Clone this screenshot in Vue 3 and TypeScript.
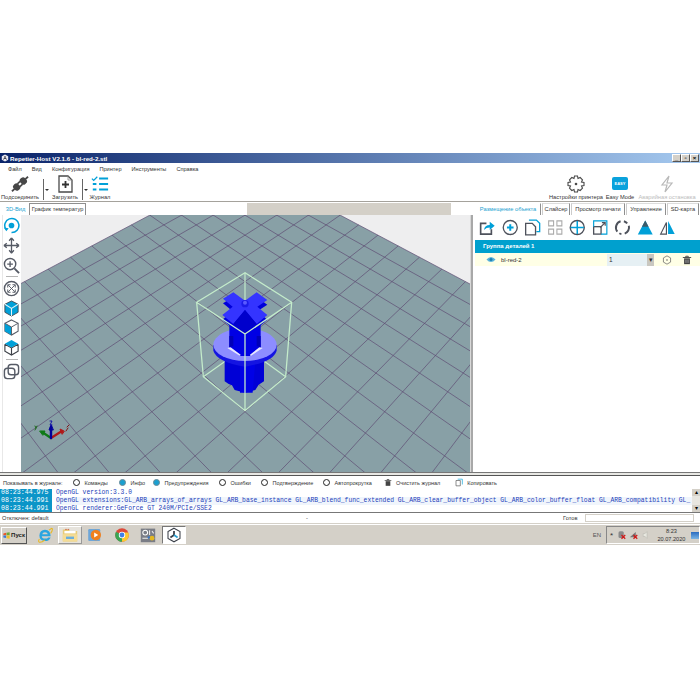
<script setup lang="ts">
const menu = ["Файл", "Вид", "Конфигурация", "Принтер", "Инструменты", "Справка"];
const rightTabs = [
  { label: "Размещение объекта", width: 66, active: true },
  { label: "Слайсер", width: 28, active: false },
  { label: "Просмотр печати", width: 54, active: false },
  { label: "Управление", width: 40, active: false },
  { label: "SD-карта", width: 32, active: false },
];
const logFilters = [
  { label: "Команды", on: false, width: 46 },
  { label: "Инфо", on: true, width: 34 },
  { label: "Предупреждения", on: true, width: 66 },
  { label: "Ошибки", on: false, width: 42 },
  { label: "Подтверждение", on: false, width: 62 },
  { label: "Автопрокрутка", on: false, width: 61 },
];
const logRows = [
  { time: "08:23:44.975", text: "OpenGL version:3.3.0" },
  {
    time: "08:23:44.991",
    text: "OpenGL extensions:GL_ARB_arrays_of_arrays GL_ARB_base_instance GL_ARB_blend_func_extended GL_ARB_clear_buffer_object GL_ARB_color_buffer_float GL_ARB_compatibility GL_",
  },
  { time: "08:23:44.991", text: "OpenGL renderer:GeForce GT 240M/PCIe/SSE2" },
];

// ground grid: perspective projection fitted to the picture
const horizon = -205;
const depthA = 0.0016215;
const depthB = 0.0000542;
const spread = 0.0755;
const project = (a: number, b: number) => {
  const w = 1 / (depthA + depthB * (a + b));
  return [245 + ((a - b) / 2) * spread * w, horizon + w];
};
const gridMax = 10;
const gridMin = -24;
const gridLines: number[][] = [];
for (let i = gridMin; i <= gridMax; i++) {
  const end = -14 - i;
  const p1 = project(i, gridMax);
  const p2 = project(i, end);
  const p3 = project(gridMax, i);
  const p4 = project(end, i);
  gridLines.push([...p1, ...p2], [...p3, ...p4]);
}
const groundPoints = [project(10, 10), project(10, -24), project(-24, 10)]
  .map((p) => p.join(","))
  .join(" ");
</script>

<template>
  <div class="page">
    <div class="window">
      <div class="titlebar">
        <svg class="title-logo" viewBox="0 0 10 10">
          <path d="M5 0.5 9 2.8V7.2L5 9.5 1 7.2V2.8Z" fill="#e8e8f0" />
          <path d="M5 2.5V5L2.8 6.6M5 5 7.2 6.6" stroke="#223" stroke-width="1.2" fill="none" />
        </svg>
        <span class="title-text">Repetier-Host V2.1.6 - bl-red-2.stl</span>
        <div class="win-btns">
          <span class="win-btn">_</span><span class="win-btn">▫</span><span class="win-btn">×</span>
        </div>
      </div>

      <div class="menubar">
        <span v-for="m in menu" :key="m" class="menu-item">{{ m }}</span>
      </div>

      <div class="toolbar">
        <div class="tool tool-connect">
          <svg viewBox="0 0 20 18" class="tool-icon">
            <g transform="rotate(-42 10 9)" fill="#474747">
              <rect x="1.500" y="5" width="7" height="8" rx="3" />
              <rect x="11.500" y="5" width="7" height="8" rx="3" />
              <rect x="8" y="6" width="4" height="1.800" />
              <rect x="8" y="10.200" width="4" height="1.800" />
              <rect x="-2" y="8" width="4" height="2" />
              <rect x="18" y="8" width="4" height="2" />
            </g>
          </svg>
          <span>Подсоединить</span>
        </div>
        <div class="tool-sep"><i></i><b></b></div>
        <div class="tool tool-load">
          <svg viewBox="0 0 18 18" class="tool-icon">
            <path d="M3 1H12L16 5V17H3Z" fill="#fff" stroke="#4a4a4a" stroke-width="1.300" />
            <path d="M9.500 6V13M6 9.500H13" stroke="#333" stroke-width="1.800" />
            <path d="M12 1V5H16" fill="none" stroke="#888" stroke-width="0.800" />
          </svg>
          <span>Загрузить</span>
        </div>
        <div class="tool-sep"><i></i><b></b></div>
        <div class="tool tool-log">
          <svg viewBox="0 0 20 18" class="tool-icon">
            <path d="M1 3 3 5 7 1" fill="none" stroke="#00a0d8" stroke-width="1.400" />
            <path d="M9 3H19M9 9H19M9 15H19" stroke="#00a0d8" stroke-width="2.200" />
            <path d="M2 9H6M2 15H6" stroke="#00a0d8" stroke-width="2.200" />
          </svg>
          <span>Журнал</span>
        </div>
        <div class="toolbar-right">
          <div class="tool tool-printer">
            <svg viewBox="0 0 18 18" class="tool-icon">
              <path d="M7.500 1H10.500L11 3.500 13.200 2.500 15.500 4.800 14.500 7 17 7.500V10.500L14.500 11 15.500 13.200 13.200 15.500 11 14.500 10.500 17H7.500L7 14.500 4.800 15.500 2.500 13.200 3.500 11 1 10.500V7.500L3.500 7 2.500 4.800 4.800 2.500 7 3.500Z" fill="none" stroke="#4a4a4a" stroke-width="1.100" />
              <circle cx="9" cy="9" r="1.300" fill="#4a4a4a" />
            </svg>
            <span>Настройки принтера</span>
          </div>
          <div class="tool tool-easy">
            <div class="easy-badge">EASY</div>
            <span>Easy Mode</span>
          </div>
          <div class="tool tool-stop">
            <svg viewBox="0 0 18 18" class="tool-icon">
              <path d="M11 1 4 10H9L7 17 14 8H9Z" fill="none" stroke="#b8b8b8" stroke-width="1.200" />
            </svg>
            <span>Аварийная остановка</span>
          </div>
        </div>
      </div>

      <div class="workspace">
        <div class="left-pane">
          <div class="tabs-left">
            <span class="tab-3d">3D-Вид</span>
            <span class="tab-temp">График температур</span>
            <span class="tab-fill"></span>
          </div>
          <div class="view-row">
            <div class="view-tools">
              <svg viewBox="0 0 18 18" class="vt">
                <path d="M3 13A7.500 7.500 0 1 1 9 16.500" fill="none" stroke="#00a0d8" stroke-width="1.600" />
                <path d="M1 11 3.500 15 6 12" fill="#00a0d8" />
                <circle cx="9" cy="9" r="3" fill="#00a0d8" />
              </svg>
              <svg viewBox="0 0 18 18" class="vt">
                <path d="M9 1V17M1 9H17M9 1 6.500 4M9 1 11.500 4M9 17 6.500 14M9 17 11.500 14M1 9 4 6.500M1 9 4 11.500M17 9 14 6.500M17 9 14 11.500" fill="none" stroke="#565b66" stroke-width="1.400" />
              </svg>
              <svg viewBox="0 0 18 18" class="vt">
                <circle cx="7.500" cy="7.500" r="6" fill="none" stroke="#565b66" stroke-width="1.500" />
                <path d="M4.500 7.500H10.500M7.500 4.500V10.500" stroke="#565b66" stroke-width="1.400" />
                <path d="M12 12 17 17" stroke="#565b66" stroke-width="2" />
              </svg>
              <div class="vt-sep"></div>
              <svg viewBox="0 0 18 18" class="vt">
                <circle cx="9" cy="9" r="7.500" fill="none" stroke="#565b66" stroke-width="1.500" />
                <path d="M5.500 5.500 12.500 12.500M12.500 5.500 5.500 12.500M5 8V5H8M13 8V5H10M5 10V13H8M13 10V13H10" fill="none" stroke="#565b66" stroke-width="1" />
              </svg>
              <svg viewBox="0 0 18 18" class="vt">
                <path d="M9 1 16 4.500V13L9 17 2 13V4.500Z" fill="#00a0d8" stroke="#3d4148" stroke-width="0.900" />
                <path d="M2 4.500 9 9 16 4.500M9 9V17" fill="none" stroke="#e8f4f8" stroke-width="1.100" />
              </svg>
              <svg viewBox="0 0 18 18" class="vt">
                <path d="M9 1 16 4.500V13L9 17 2 13V4.500Z" fill="#fff" stroke="#565b66" stroke-width="1.100" />
                <path d="M2 4.500 9 8.500V17L2 13Z" fill="#00a0d8" />
                <path d="M2 4.500 9 8.500 16 4.500M9 8.500V17" fill="none" stroke="#565b66" stroke-width="1" />
              </svg>
              <svg viewBox="0 0 18 18" class="vt">
                <path d="M2 5.500V13L9 17 16 13V5.500M2 5.500 9 9.500 16 5.500M9 9.500V17" fill="none" stroke="#3d4148" stroke-width="1.200" />
                <path d="M9 1 16 5 9 9 2 5Z" fill="#00a0d8" />
              </svg>
              <div class="vt-sep sep-b"></div>
              <svg viewBox="0 0 18 18" class="vt">
                <rect x="5.500" y="1.500" width="11" height="11" rx="3" fill="none" stroke="#565b66" stroke-width="1.500" />
                <rect x="1.500" y="5.500" width="11" height="11" rx="3" fill="none" stroke="#565b66" stroke-width="1.500" />
              </svg>
            </div>

            <svg class="scene" viewBox="21 215 449 257" width="449" height="257">
              <rect x="21" y="215" width="449" height="257" fill="#eeeeef" />
              <polygon :points="groundPoints" fill="#88a0a6" />
              <line
                v-for="(l, i) in gridLines"
                :key="i"
                :x1="l[0]"
                :y1="l[1]"
                :x2="l[2]"
                :y2="l[3]"
                stroke="#5d4a72"
                stroke-width="0.800"
                stroke-opacity="0.850"
              />
              <!-- part and bounding box, drawn in 3x crop coordinates -->
              <g transform="translate(190 260) scale(0.3333)">
                <g fill="none" stroke="#c4eccb" stroke-width="3.500">
                  <path d="M40 350 165 262 287 350" />
                  <path d="M165 38V262" />
                </g>
                <path d="M104 285V364L116 372 126 376 134 390 165 398 196 390 206 374 222 364V285Z" fill="#0000d6" />
                <path d="M150 300V398H188L196 300Z" fill="#0000e6" />
                <path d="M70 255V272Q80 306 165 320 250 306 260 272V255Z" fill="#1414e2" />
                <ellipse cx="165" cy="254" rx="95" ry="49" fill="#8d8dff" />
                <path d="M118 160V262L150 288H180L212 262V160Z" fill="#0000e4" />
                <path d="M112 264 122 262 152 284 150 288ZM218 264 208 262 180 284 182 288Z" fill="#e8e8ff" />
                <path d="M118 228H130V258L118 262ZM212 228H200V258L212 262Z" fill="#0000b8" />
                <path d="M99 130 130 111 165 136 200 111 232 134 202 154 232 179 200 206 165 164 130 206 97 179 128 154Z" fill="#0000da" />
                <path d="M99 116 130 97 165 122 200 97 232 120 202 140 232 165 200 192 165 150 130 192 97 165 128 140Z" fill="#3434ff" />
                <path d="M130 192 165 150 200 192 165 222Z" fill="#0000cc" />
                <circle cx="165" cy="131" r="11" fill="#1c1ce8" />
                <circle cx="165" cy="128" r="6" fill="#5a5aff" />
                <g fill="none" stroke="#c4eccb" stroke-width="3.800">
                  <path d="M165 38 20 127 165 222 305 127ZM20 127 40 350 165 452 287 350 305 127M165 222V452" />
                </g>
              </g>
              <!-- axis gizmo -->
              <g stroke-linecap="round">
                <path d="M51 438 62 431" stroke="#b01818" stroke-width="2.200" />
                <path d="M64 431 60 429 62 434Z" fill="#b01818" stroke="#b01818" />
                <path d="M51 438 42 432" stroke="#0e7a16" stroke-width="2.200" />
                <path d="M40 431 45 431 43 435Z" fill="#0e7a16" stroke="#0e7a16" />
                <path d="M51 438V427" stroke="#00009a" stroke-width="2.400" />
                <path d="M51 425 49 430H53Z" fill="#00009a" stroke="#00009a" />
                <path d="M67 427 69 425M66 431 68 428" stroke="#801818" stroke-width="1" />
                <path d="M35 426 36 428M37 426 35 430" stroke="#1e6a1e" stroke-width="1" />
                <path d="M50 421 52 421 50 425 52 425" fill="none" stroke="#1414a8" stroke-width="1" />
              </g>
            </svg>
            <div class="view-edge"></div>
          </div>
        </div>

        <div class="right-pane">
          <div class="tabs-right">
            <span
              v-for="t in rightTabs"
              :key="t.label"
              class="rtab"
              :class="{ active: t.active }"
              :style="{ width: t.width + 'px' }"
            >{{ t.label }}</span>
          </div>
          <div class="obj-tools">
            <svg viewBox="0 0 20 20" class="ot">
              <path d="M9 5H2V18H15V12" fill="none" stroke="#4e525c" stroke-width="2" />
              <path d="M6 13Q7 7 13 7V3L19 8 13 13V10Q9 10 6 13Z" fill="#00a0d8" />
            </svg>
            <svg viewBox="0 0 20 20" class="ot">
              <circle cx="10" cy="10" r="8.500" fill="none" stroke="#4e525c" stroke-width="1.600" />
              <path d="M10 6V14M6 10H14" stroke="#00a0d8" stroke-width="2.400" />
            </svg>
            <svg viewBox="0 0 20 20" class="ot">
              <path d="M6 1H15L19 5V15H15" fill="none" stroke="#00a0d8" stroke-width="1.600" />
              <path d="M2 5H10L14 9V19H2Z" fill="#fff" stroke="#4e525c" stroke-width="1.600" />
            </svg>
            <svg viewBox="0 0 20 20" class="ot">
              <path d="M2 2H8V8H2ZM12 2H18V8H12ZM2 12H8V18H2ZM12 12H18V18H12Z" fill="none" stroke="#aaa" stroke-width="1.300" />
            </svg>
            <svg viewBox="0 0 20 20" class="ot">
              <circle cx="10" cy="10" r="8.500" fill="none" stroke="#4e525c" stroke-width="1.700" />
              <path d="M10 2V18M2 10H18" stroke="#00a0d8" stroke-width="1.800" />
            </svg>
            <svg viewBox="0 0 20 20" class="ot">
              <rect x="2" y="9" width="9" height="9" fill="none" stroke="#4e525c" stroke-width="1.600" />
              <path d="M2 9V2H18V18H11" fill="none" stroke="#00a0d8" stroke-width="1.400" />
              <path d="M10 10 16 4M12 4H16V8" fill="none" stroke="#4e525c" stroke-width="1.400" />
            </svg>
            <svg viewBox="0 0 20 20" class="ot">
              <path d="M4 15A8 8 0 0 1 8 2.500M12 2.500A8 8 0 0 1 16 5M18 8A8 8 0 0 1 13 17.500M9 18A8 8 0 0 1 6.500 17" fill="none" stroke="#4e525c" stroke-width="2.400" />
            </svg>
            <svg viewBox="0 0 20 20" class="ot">
              <path d="M10 1.500 19 18.500H1Z" fill="#00a0d8" />
              <path d="M10 1.500 6 9H14Z" fill="#3d5a68" />
            </svg>
            <svg viewBox="0 0 20 20" class="ot">
              <path d="M9 4V18H2Z" fill="none" stroke="#4e525c" stroke-width="1.400" />
              <path d="M11 2 19 18H11Z" fill="#00a0d8" />
            </svg>
          </div>
          <div class="group-head">Группа деталей 1</div>
          <div class="obj-row">
            <svg viewBox="0 0 12 8" class="eye">
              <path d="M0.500 4Q6 -2 11.500 4 6 10 0.500 4Z" fill="#5ab4dc" />
              <circle cx="6" cy="4" r="1.800" fill="#1b7fb0" />
            </svg>
            <span class="obj-name">bl-red-2</span>
            <div class="obj-select">
              <span>1</span>
              <i class="arrow">▾</i>
            </div>
            <svg viewBox="0 0 12 12" class="row-ico gear">
              <path d="M6 1 10.300 3.500V8.500L6 11 1.700 8.500V3.500Z" fill="none" stroke="#666" stroke-width="0.900" />
              <circle cx="6" cy="6" r="1" fill="#666" />
            </svg>
            <svg viewBox="0 0 12 12" class="row-ico trash">
              <path d="M1 3H11M4.500 3V1.500H7.500V3" fill="none" stroke="#444" stroke-width="1.100" />
              <path d="M2.500 4H9.500V11H2.500Z" fill="#444" />
              <path d="M4.500 5.500V9.500M6 5.500V9.500M7.500 5.500V9.500" stroke="#ddd" stroke-width="0.500" />
            </svg>
          </div>
        </div>
      </div>

      <div class="splitter"></div>

      <div class="log">
        <div class="log-filters">
          <span class="show-label">Показывать в журнале:</span>
          <span v-for="f in logFilters" :key="f.label" class="filter" :style="{ width: f.width + 'px' }">
            <i class="radio" :class="{ on: f.on }"></i>{{ f.label }}
          </span>
          <span class="log-action clear">
            <svg viewBox="0 0 12 12" class="log-ico">
              <path d="M1 3H11M4.500 3V1.500H7.500V3" fill="none" stroke="#444" stroke-width="1.100" />
              <path d="M2.500 4H9.500V11H2.500Z" fill="#444" />
            </svg>
            Очистить журнал
          </span>
          <span class="log-action copy">
            <svg viewBox="0 0 12 12" class="log-ico">
              <path d="M4 1H11V9" fill="none" stroke="#00a0d8" stroke-width="1" />
              <path d="M1.500 3H8V11H1.500Z" fill="#fff" stroke="#555" stroke-width="1" />
            </svg>
            Копировать
          </span>
        </div>
        <div class="log-body">
          <div class="log-lines">
            <div v-for="(r, i) in logRows" :key="i" class="log-row" :class="{ alt: i === 1 }">
              <span class="log-time">{{ r.time }}</span>
              <span class="log-text">{{ r.text }}</span>
            </div>
          </div>
          <div class="log-scroll">
            <span>▴</span><span>▾</span>
          </div>
        </div>
      </div>

      <div class="statusbar">
        <span class="status-left">Отключен: default</span>
        <span class="status-dash">-</span>
        <span class="status-ready">Готов</span>
        <span class="status-box"></span>
      </div>
    </div>

    <div class="taskbar">
      <div class="start">
        <svg viewBox="0 0 10 10" class="start-flag">
          <path d="M0.500 2 4.500 1V4.500H0.500Z" fill="#e8552a" />
          <path d="M5 1 9.500 0.500V4.500H5Z" fill="#6aa83a" />
          <path d="M0.500 5H4.500V8.500L0.500 8Z" fill="#3a78d8" />
          <path d="M5 5H9.500V9.500L5 9Z" fill="#eec12a" />
        </svg>
        Пуск
      </div>
      <div class="quick ie">
        <svg viewBox="0 0 20 20">
          <path d="M15.500 11.500H6Q6 14.500 10 14.500 13 14.500 14 13H17Q15.500 17.500 10 17.500 3 17 3 10.500 3.500 4 10 3.500 17 4 17 11.500ZM13.500 9Q13 6.500 10 6.500 7 6.500 6.500 9Z" fill="#2aa5e0" />
          <path d="M3 15Q1 18 3 19 6 19.500 10 16M15 4Q18 1 19 2 20 4 17 8" fill="none" stroke="#e8b820" stroke-width="1.300" />
        </svg>
      </div>
      <div class="quick folder raised">
        <svg viewBox="0 0 20 20">
          <path d="M1 3H8L10 5H19V18H1Z" fill="#e8cc78" />
          <path d="M3 5H17V8H3Z" fill="#fff" />
          <path d="M1 9H19V18H1Z" fill="#f4dc96" />
          <path d="M5 12H15V15H5Z" fill="#6aaedc" />
          <path d="M4 3H6M7 3H9" stroke="#c85030" stroke-width="1" />
        </svg>
      </div>
      <div class="quick media">
        <svg viewBox="0 0 20 20">
          <rect x="1.500" y="2.500" width="15" height="15" rx="1.500" fill="#6ea6d8" />
          <circle cx="11" cy="10" r="6.500" fill="#f0801e" />
          <path d="M9 7 14 10 9 13Z" fill="#fff" />
        </svg>
      </div>
      <div class="quick chrome">
        <svg viewBox="0 0 20 20">
          <circle cx="10" cy="10" r="8.500" fill="#dd4a3a" />
          <path d="M10 10 2.500 6A8.500 8.500 0 0 0 10 18.500Z" fill="#3aa655" />
          <path d="M10 10V18.500A8.500 8.500 0 0 0 18 7H10Z" fill="#fcc934" />
          <circle cx="10" cy="10" r="4" fill="#fff" />
          <circle cx="10" cy="10" r="3" fill="#3f80e8" />
        </svg>
      </div>
      <div class="quick tools">
        <svg viewBox="0 0 20 20">
          <rect x="1" y="2" width="18" height="17" fill="#7a7d86" />
          <circle cx="6.500" cy="7" r="3" fill="none" stroke="#fff" stroke-width="1.300" />
          <path d="M12 4V10M15 5 17 8M3 14H10" stroke="#eee" stroke-width="1.300" />
          <circle cx="15" cy="14" r="3" fill="#e4b820" />
          <circle cx="11" cy="13" r="1.500" fill="#3a78c8" />
        </svg>
      </div>
      <div class="quick repetier">
        <svg viewBox="0 0 20 20">
          <path d="M10 1.500 17.500 5.800V14.200L10 18.500 2.500 14.200V5.800Z" fill="#fff" stroke="#3a3f48" stroke-width="1.300" />
          <path d="M10 5V10L5.500 13" fill="none" stroke="#3a3f48" stroke-width="2.200" />
          <path d="M10 10 14.500 13" fill="none" stroke="#2a9fd0" stroke-width="2.200" />
        </svg>
      </div>
      <div class="tray">
        <span class="lang">EN</span>
        <div class="tray-box">
          <span class="tray-star">*</span>
          <svg viewBox="0 0 12 12" class="tray-ico">
            <rect x="2" y="1" width="7" height="9" rx="2" fill="#8a8a8a" />
            <path d="M6 6 11 11M11 6 6 11" stroke="#d01818" stroke-width="1.600" />
          </svg>
          <svg viewBox="0 0 12 12" class="tray-ico">
            <path d="M1 9 9 2V9Z" fill="#777" />
            <path d="M6 6 11 11M11 6 6 11" stroke="#d01818" stroke-width="1.600" />
          </svg>
          <svg viewBox="0 0 12 12" class="tray-ico">
            <path d="M3 4H5.500L8 1.500V10.500L5.500 8H3Z" fill="#e8e8e0" stroke="#b0b0a8" stroke-width="0.600" />
          </svg>
          <div class="clock">
            <span>8:23</span>
            <span>20.07.2020</span>
          </div>
          <div class="desk-btn"></div>
        </div>
      </div>
    </div>
  </div>
</template>

<style scoped>
.page {
  width: 700px;
  height: 700px;
  padding-top: 153px;
  box-sizing: border-box;
  background: #fff;
  font-family: "Liberation Sans", Arial, sans-serif;
  font-size: 6.5px;
  color: #333;
  overflow: hidden;
}
.window {
  display: flex;
  flex-direction: column;
  height: 371px;
}
.titlebar {
  height: 10px;
  display: flex;
  align-items: center;
  padding-left: 1px;
  background: linear-gradient(to right, #0a246a 0%, #a6caf0 100%);
  color: #fff;
  font-weight: bold;
  font-size: 6.2px;
}
.title-logo {
  width: 8px;
  height: 8px;
  margin-right: 1px;
}
.win-btns {
  margin-left: auto;
  display: flex;
  margin-right: 1px;
}
.win-btn {
  width: 9px;
  height: 8px;
  box-sizing: border-box;
  background: #d4d0c8;
  border: 1px solid;
  border-color: #fff #555 #555 #fff;
  color: #000;
  font-size: 6px;
  line-height: 6px;
  text-align: center;
  font-weight: bold;
}
.menubar {
  height: 12px;
  display: flex;
  align-items: center;
  padding-left: 8px;
  gap: 10px;
  font-size: 5.6px;
  background: #fff;
}
.toolbar {
  height: 27px;
  display: flex;
  align-items: flex-start;
  background: #fff;
  border-bottom: 1px solid #a5a29c;
  box-sizing: border-box;
}
.tool {
  display: flex;
  flex-direction: column;
  align-items: center;
  font-size: 5.7px;
  line-height: 7px;
  white-space: nowrap;
}
.tool-icon {
  width: 18px;
  height: 18px;
  margin-bottom: 1px;
}
.tool-connect {
  width: 36px;
  margin-left: 2px;
}
.tool-sep {
  display: flex;
  align-items: center;
  height: 22px;
  margin: 3px 0 0 5px;
  gap: 1px;
}
.tool-sep + .tool-load + .tool-sep {
  margin-left: 3px;
}
.tool-sep i {
  width: 1px;
  height: 21px;
  background: #666;
}
.tool-sep b {
  width: 0;
  height: 0;
  border: 2px solid transparent;
  border-top: 2px solid #333;
  margin-top: 3px;
}
.tool-load {
  width: 28px;
  margin-left: 2px;
}
.tool-log {
  width: 22px;
  margin-left: 1px;
}
.toolbar-right {
  margin-left: auto;
  display: flex;
  align-items: flex-start;
}
.tool-printer {
  width: 54px;
}
.tool-easy {
  width: 32px;
  margin-left: 1px;
}
.easy-badge {
  width: 16px;
  height: 13px;
  margin: 2px 0 4px;
  border-radius: 2px;
  background: #0aa2dc;
  color: #fff;
  font-size: 4px;
  line-height: 13px;
  text-align: center;
  font-weight: bold;
}
.tool-stop {
  width: 60px;
  margin-left: 1px;
  margin-right: 3px;
  color: #bcbcbc;
}
.workspace {
  height: 270px;
  display: flex;
}
.left-pane {
  width: 474px;
  display: flex;
  flex-direction: column;
}
.tabs-left {
  height: 13px;
  display: flex;
  align-items: flex-end;
  padding-left: 3px;
  font-size: 5.7px;
}
.tab-3d {
  width: 25px;
  height: 12px;
  line-height: 12px;
  text-align: center;
  color: #1a9fd0;
}
.tab-temp {
  width: 57px;
  height: 12px;
  line-height: 11px;
  text-align: center;
  border: 1px solid #8f8f8f;
  border-bottom: none;
  box-sizing: border-box;
  margin-left: 1px;
  white-space: nowrap;
}
.tab-fill {
  width: 204px;
  height: 12px;
  margin-left: 161px;
  background: #d4d0c8;
}
.view-row {
  flex: 1;
  display: flex;
}
.view-tools {
  width: 19px;
  margin-left: 2px;
  padding-top: 2px;
  display: flex;
  flex-direction: column;
  align-items: center;
  box-sizing: border-box;
  box-shadow: inset 1px 0 0 #e8e8e8;
}
.vt {
  width: 17px;
  height: 17px;
  margin-bottom: 2.800px;
  flex: none;
}
.vt-sep {
  width: 12px;
  height: 1px;
  background: #b5b5b5;
  margin: 0 0 2.500px;
  flex: none;
}
.scene {
  display: block;
  flex: none;
}
.view-edge {
  width: 3px;
  background: #a8a8a8;
  border-left: 1px solid #d8d8d8;
  box-sizing: border-box;
}
.right-pane {
  width: 226px;
  display: flex;
  flex-direction: column;
  background: #fff;
}
.tabs-right {
  height: 13px;
  display: flex;
  gap: 1px;
  align-items: flex-end;
  padding-left: 1px;
  font-size: 5.7px;
}
.rtab {
  height: 12px;
  line-height: 11px;
  text-align: center;
  border: 1px solid #8f8f8f;
  border-bottom: none;
  border-left-color: #ccc;
  border-top-color: #ddd;
  box-sizing: border-box;
  white-space: nowrap;
  flex: none;
}
.rtab.active {
  color: #1a9fd0;
  border-color: transparent #8f8f8f transparent transparent;
}
.obj-tools {
  height: 25px;
  display: flex;
  align-items: center;
  gap: 6px;
  padding-left: 5px;
  box-sizing: border-box;
}
.ot {
  width: 16.500px;
  height: 17px;
  flex: none;
}
.group-head {
  height: 13px;
  margin-left: 1px;
  padding-left: 8px;
  background: #00a0ce;
  color: #fff;
  font-weight: bold;
  font-size: 6px;
  line-height: 13px;
}
.obj-row {
  height: 13px;
  margin-left: 1px;
  display: flex;
  align-items: center;
  background: #ffffe6;
}
.eye {
  width: 10px;
  height: 7px;
  margin-left: 11px;
}
.obj-name {
  margin-left: 5px;
  width: 106px;
  font-size: 6px;
}
.obj-select {
  width: 47px;
  height: 12px;
  background: #e6f0f4;
  display: flex;
  align-items: center;
  padding-left: 2px;
  box-sizing: border-box;
}
.arrow {
  margin-left: auto;
  width: 7px;
  height: 12px;
  background: #c9c7c0;
  font-style: normal;
  text-align: center;
  line-height: 12px;
}
.row-ico {
  width: 10px;
  height: 10px;
  flex: none;
}
.gear {
  margin-left: 8px;
}
.trash {
  margin-left: 10px;
}
.splitter {
  height: 3px;
  background: #e8e8e4;
  border-top: 1px solid #777;
  box-sizing: border-box;
}
.log {
  height: 38px;
  border-top: 1px solid #555;
  border-bottom: 1px solid #777;
  box-sizing: border-box;
  display: flex;
  flex-direction: column;
}
.log-filters {
  height: 13px;
  display: flex;
  align-items: center;
  padding-left: 3px;
  font-size: 5.5px;
  white-space: nowrap;
  flex: none;
}
.show-label {
  width: 70px;
  flex: none;
}
.filter {
  display: flex;
  align-items: center;
  flex: none;
}
.radio {
  width: 7px;
  height: 7px;
  margin-right: 4.500px;
  border: 1px solid #222;
  border-radius: 50%;
  background: #fff;
  box-sizing: border-box;
  flex: none;
}
.radio.on {
  background: #1a9fd0;
  border-color: #6a8a98;
}
.log-action {
  display: flex;
  align-items: center;
}
.log-action.copy {
  margin-left: 15px;
}
.log-ico {
  width: 8px;
  height: 9px;
  margin-right: 4px;
}
.log-body {
  flex: 1;
  display: flex;
  overflow: hidden;
}
.log-lines {
  flex: 1;
  overflow: hidden;
}
.log-row {
  height: 8px;
  display: flex;
  font-family: "Liberation Mono", monospace;
  line-height: 8px;
  white-space: nowrap;
}
.log-row.alt .log-text {
  background: #f0f5fc;
}
.log-time {
  width: 52px;
  flex: none;
  background: #0b95c8;
  color: #fff;
  padding-left: 1px;
  box-sizing: border-box;
  font-size: 6.600px;
}
.log-text {
  margin-left: 4px;
  flex: 1;
  overflow: hidden;
  color: #2340b8;
  font-size: 6.330px;
}
.log-scroll {
  width: 8px;
  display: flex;
  flex-direction: column;
  justify-content: space-between;
  background: #e8e6e0;
  flex: none;
}
.log-scroll span {
  height: 7px;
  line-height: 7px;
  text-align: center;
  font-size: 6px;
  color: #000;
  background: #d4d0c8;
}
.statusbar {
  height: 11px;
  display: flex;
  align-items: center;
  padding-left: 2px;
  background: #fff;
  font-size: 5.7px;
  border-bottom: 1px solid #d4d0c8;
  box-sizing: border-box;
}
.status-left {
  width: 304px;
}
.status-dash {
  width: 257px;
}
.status-ready {
  width: 20px;
  flex: none;
}
.status-box {
  width: 109px;
  height: 8px;
  border: 1px solid #d4d0c8;
  margin-left: 2px;
  box-sizing: border-box;
}
.taskbar {
  height: 21px;
  display: flex;
  align-items: center;
  background: #d4d0c8;
  border-top: 1px solid #fff;
  box-sizing: border-box;
}
.start {
  width: 26px;
  height: 17px;
  margin-left: 1px;
  display: flex;
  align-items: center;
  justify-content: center;
  gap: 1px;
  box-sizing: border-box;
  border: 1px solid;
  border-color: #fff #555 #555 #fff;
  font-size: 6px;
  font-weight: bold;
  color: #222;
}
.start-flag {
  width: 7px;
  height: 7px;
}
.quick {
  width: 24px;
  height: 18px;
  display: flex;
  align-items: center;
  justify-content: center;
  box-sizing: border-box;
  flex: none;
}
.quick svg {
  width: 16px;
  height: 16px;
}
.ie {
  margin-left: 6px;
}
.folder {
  margin-left: 1px;
}
.raised {
  background: #e6e3dc;
  border: 1px solid;
  border-color: #fff #999 #999 #fff;
}
.media {
  margin-left: 1px;
}
.chrome {
  margin-left: 3px;
}
.tools {
  margin-left: 2px;
}
.repetier {
  margin-left: 2px;
  background: #fff;
  border: 1px solid;
  border-color: #777 #fff #fff #777;
}
.tray {
  margin-left: auto;
  display: flex;
  align-items: center;
  height: 100%;
}
.lang {
  margin-right: 5px;
  font-size: 6px;
  color: #555;
}
.tray-box {
  width: 94px;
  height: 18px;
  display: flex;
  align-items: center;
  box-sizing: border-box;
  padding-left: 3px;
  border: 1px solid;
  border-color: #888 #fff #fff #888;
}
.tray-star {
  width: 7px;
  font-size: 8px;
}
.tray-ico {
  width: 9px;
  height: 10px;
  margin-right: 3px;
  flex: none;
}
.clock {
  width: 34px;
  margin-left: 2px;
  display: flex;
  flex-direction: column;
  align-items: center;
  font-size: 5.600px;
  line-height: 8px;
}
.desk-btn {
  width: 8px;
  height: 7px;
  margin-left: 3px;
  background: linear-gradient(#2a6cc0, #7ab4e4);
  flex: none;
}
</style>
